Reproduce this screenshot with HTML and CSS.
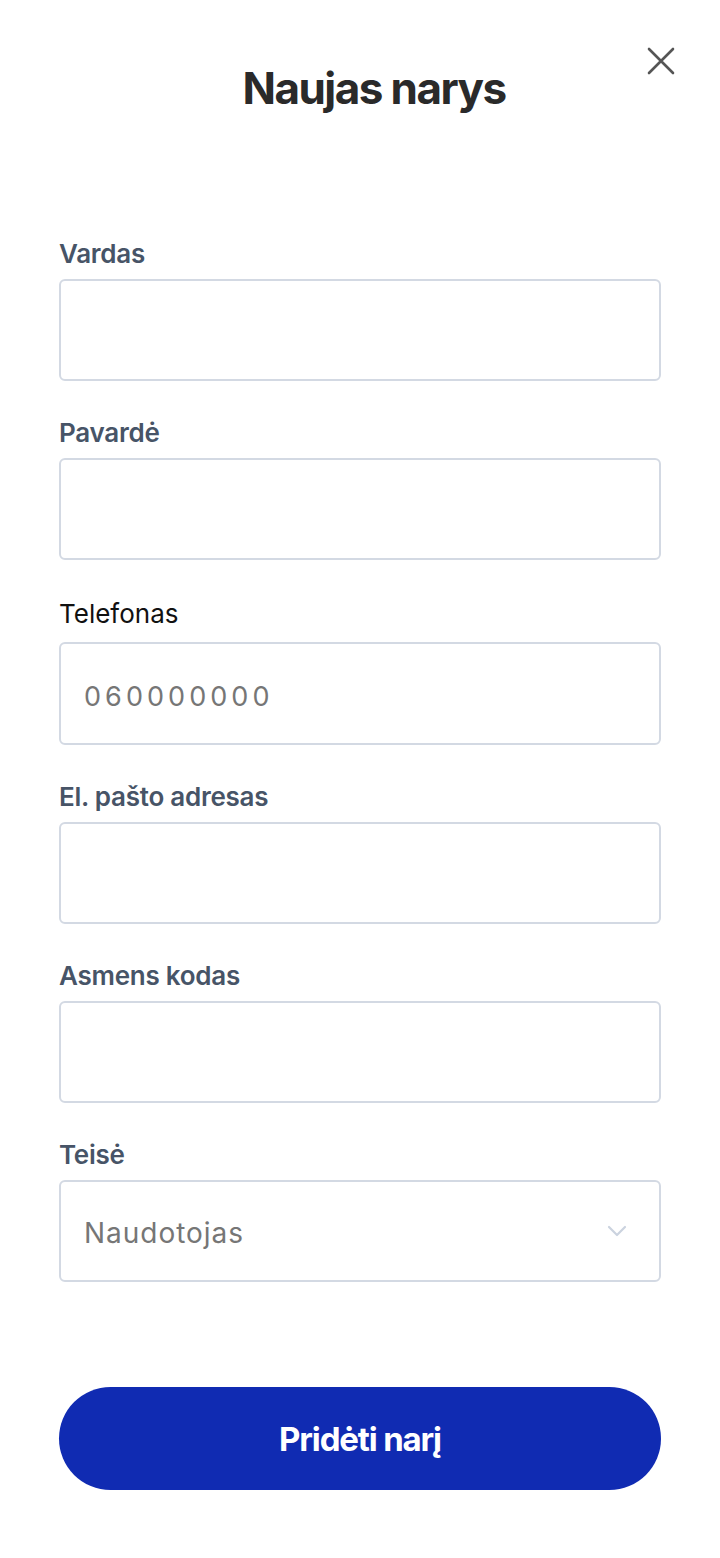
FILE: index.html
```html
<!DOCTYPE html>
<html lang="lt">
<head>
    <meta charset="UTF-8">
    <meta name="viewport" content="width=device-width, initial-scale=1.0">
    <title>Naujas narys</title>
    <link rel="stylesheet" href="styles.css">
</head>
<body>
    <div class="modal">
        <button class="close" aria-label="Uždaryti">
            <svg width="28" height="28" viewBox="0 0 28 28" fill="none" stroke="#555" stroke-width="2.6" stroke-linecap="round">
                <path d="M2 2 L26 26 M26 2 L2 26"/>
            </svg>
        </button>

        <h1>Naujas narys</h1>

        <form class="form">
            <div class="form-group">
                <label>Vardas</label>
                <input type="text">
            </div>
            <div class="form-group">
                <label>Pavardė</label>
                <input type="text">
            </div>
            <div class="form-group">
                <label class="plain">Telefonas</label>
                <input type="tel" placeholder="060000000">
            </div>
            <div class="form-group">
                <label>El. pašto adresas</label>
                <input type="email">
            </div>
            <div class="form-group">
                <label>Asmens kodas</label>
                <input type="text">
            </div>
            <div class="form-group">
                <label>Teisė</label>
                <div class="select">
                    <span>Naudotojas</span>
                    <svg width="20" height="12" viewBox="0 0 20 12" fill="none" stroke="#cbd3df" stroke-width="2.2" stroke-linecap="round" stroke-linejoin="round">
                        <path d="M2 2 L10 10 L18 2"/>
                    </svg>
                </div>
            </div>

            <button type="button" class="submit">Pridėti narį</button>
        </form>
    </div>
</body>
</html>
```

FILE: styles.css
```css
body {
    margin: 0;
    background-color: #fff;
    font-family: Inter, "Noto Sans", sans-serif;
    color: #2a2a2a;
}
.modal {
    position: relative;
    padding: 58px 59px 60px;
}
.close {
    position: absolute;
    top: 47px;
    right: 45px;
    width: 28px;
    height: 28px;
    padding: 0;
    border: none;
    background: none;
    cursor: pointer;
}
.close svg {
    display: block;
}
h1 {
    margin: 0;
    padding-left: 28px;
    text-align: center;
    font-size: 44px;
    line-height: 60px;
    font-weight: 700;
    letter-spacing: -0.035em;
    color: #2a2a2a;
}
.form {
    margin-top: 121px;
}
.form-group {
    margin-bottom: 37px;
}
label {
    display: block;
    margin-bottom: 10px;
    font-size: 26px;
    line-height: 30px;
    font-weight: 600;
    letter-spacing: -0.01em;
    color: #475467;
}
label.plain {
    margin-bottom: 13px;
    padding-top: 2px;
    font-weight: 400;
    letter-spacing: 0;
    color: #111;
}
input, .select {
    display: block;
    width: 100%;
    height: 102px;
    box-sizing: border-box;
    padding: 0 23px;
    border: 2px solid #d3d9e3;
    border-radius: 6px;
    font-family: Inter, "Noto Sans", sans-serif;
    font-size: 27px;
    color: #333;
    background: #fff;
}
input[type="tel"] {
    height: 103px;
    padding-top: 5px;
}
input::placeholder {
    color: #767676;
    letter-spacing: 0.15em;
}
.select {
    display: flex;
    align-items: center;
    justify-content: space-between;
    padding-top: 4px;
    padding-right: 32px;
    font-size: 28px;
    color: #767676;
}
.select svg {
    margin-top: -4px;
}
.select span {
    letter-spacing: 0.035em;
}
.submit {
    display: block;
    width: 100%;
    height: 103px;
    margin-top: 105px;
    border: none;
    border-radius: 52px;
    background-color: #102bb2;
    color: #fff;
    font-family: Inter, "Noto Sans", sans-serif;
    font-size: 33px;
    font-weight: 700;
    letter-spacing: -0.035em;
    cursor: pointer;
}
```
